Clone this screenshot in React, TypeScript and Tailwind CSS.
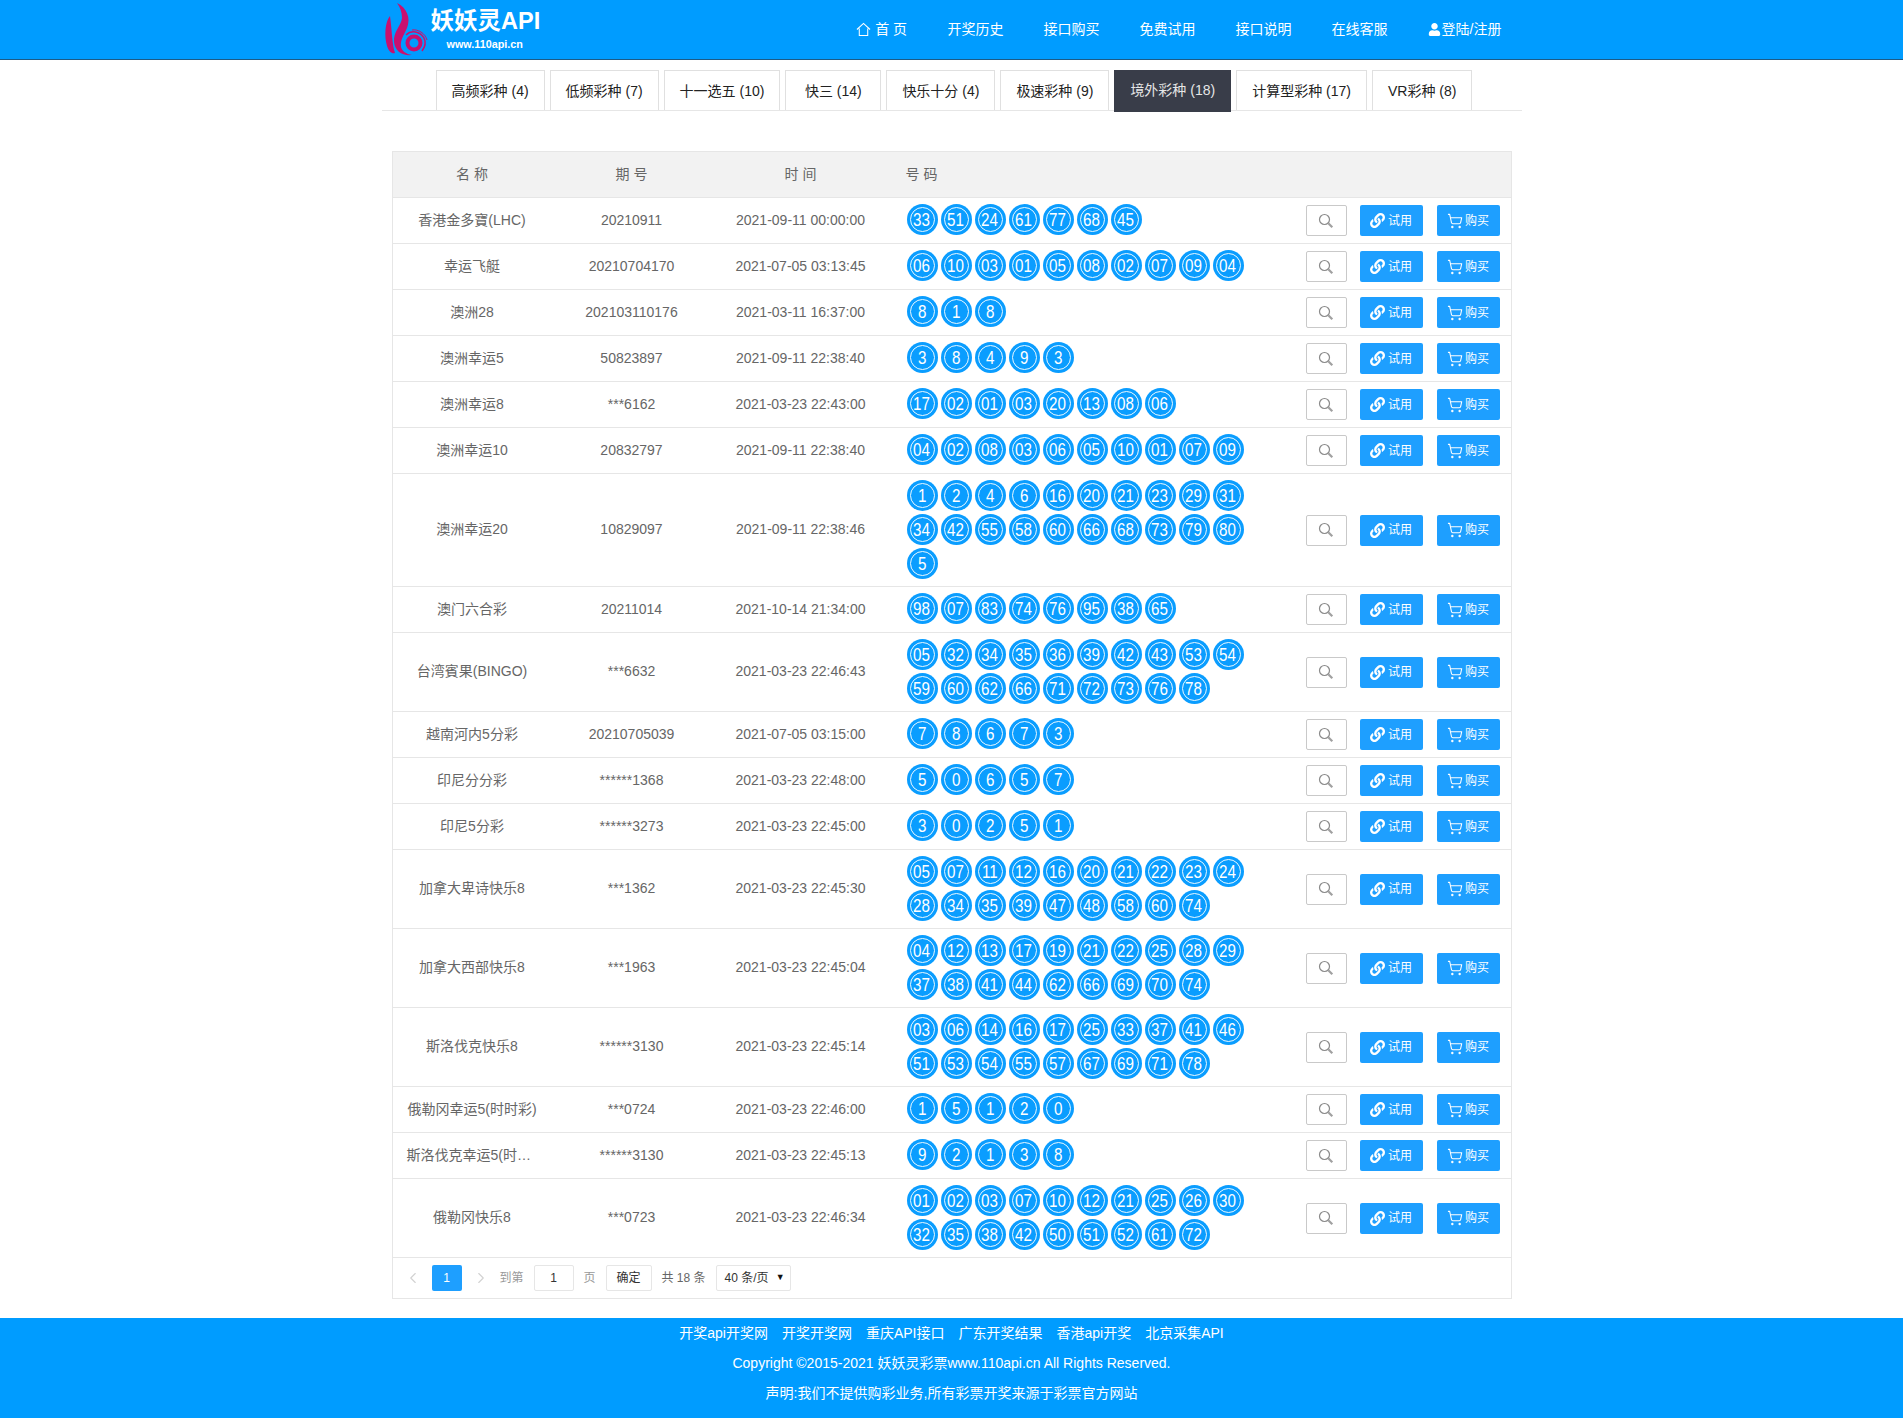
import React from 'react';
import { ChevronLeft, ChevronRight, ShoppingCart } from "lucide-react";
import { FaLink, FaUser } from "react-icons/fa";

const navItems = ["开奖历史", "接口购买", "免费试用", "接口说明", "在线客服"];

const tabs = [
  { label: "高频彩种 (4)" },
  { label: "低频彩种 (7)" },
  { label: "十一选五 (10)" },
  { label: "快三 (14)" },
  { label: "快乐十分 (4)" },
  { label: "极速彩种 (9)" },
  { label: "境外彩种 (18)", active: true },
  { label: "计算型彩种 (17)" },
  { label: "VR彩种 (8)" },
];

const rows = [
  { name: "香港金多寶(LHC)", issue: "20210911", time: "2021-09-11 00:00:00", nums: "33 51 24 61 77 68 45" },
  { name: "幸运飞艇", issue: "20210704170", time: "2021-07-05 03:13:45", nums: "06 10 03 01 05 08 02 07 09 04" },
  { name: "澳洲28", issue: "202103110176", time: "2021-03-11 16:37:00", nums: "8 1 8" },
  { name: "澳洲幸运5", issue: "50823897", time: "2021-09-11 22:38:40", nums: "3 8 4 9 3" },
  { name: "澳洲幸运8", issue: "***6162", time: "2021-03-23 22:43:00", nums: "17 02 01 03 20 13 08 06" },
  { name: "澳洲幸运10", issue: "20832797", time: "2021-09-11 22:38:40", nums: "04 02 08 03 06 05 10 01 07 09" },
  { name: "澳洲幸运20", issue: "10829097", time: "2021-09-11 22:38:46", nums: "1 2 4 6 16 20 21 23 29 31 34 42 55 58 60 66 68 73 79 80 5" },
  { name: "澳门六合彩", issue: "20211014", time: "2021-10-14 21:34:00", nums: "98 07 83 74 76 95 38 65" },
  { name: "台湾賓果(BINGO)", issue: "***6632", time: "2021-03-23 22:46:43", nums: "05 32 34 35 36 39 42 43 53 54 59 60 62 66 71 72 73 76 78" },
  { name: "越南河内5分彩", issue: "20210705039", time: "2021-07-05 03:15:00", nums: "7 8 6 7 3" },
  { name: "印尼分分彩", issue: "******1368", time: "2021-03-23 22:48:00", nums: "5 0 6 5 7" },
  { name: "印尼5分彩", issue: "******3273", time: "2021-03-23 22:45:00", nums: "3 0 2 5 1" },
  { name: "加拿大卑诗快乐8", issue: "***1362", time: "2021-03-23 22:45:30", nums: "05 07 11 12 16 20 21 22 23 24 28 34 35 39 47 48 58 60 74" },
  { name: "加拿大西部快乐8", issue: "***1963", time: "2021-03-23 22:45:04", nums: "04 12 13 17 19 21 22 25 28 29 37 38 41 44 62 66 69 70 74" },
  { name: "斯洛伐克快乐8", issue: "******3130", time: "2021-03-23 22:45:14", nums: "03 06 14 16 17 25 33 37 41 46 51 53 54 55 57 67 69 71 78" },
  { name: "俄勒冈幸运5(时时彩)", issue: "***0724", time: "2021-03-23 22:46:00", nums: "1 5 1 2 0" },
  { name: "斯洛伐克幸运5(时时彩)", issue: "******3130", time: "2021-03-23 22:45:13", nums: "9 2 1 3 8" },
  { name: "俄勒冈快乐8", issue: "***0723", time: "2021-03-23 22:46:34", nums: "01 02 03 07 10 12 21 25 26 30 32 35 38 42 50 51 52 61 72" },
];

const footerLinks = ["开奖api开奖网", "开奖开奖网", "重庆API接口", "广东开奖结果", "香港api开奖", "北京采集API"];

const Logo = () => (
  <svg viewBox="0 0 60 60" className="h-[60px] w-[60px] shrink-0">
    <path d="M11 16 C6 22 5 36 8 46 C10 52 13 54 16 53 C13 44 13 30 11 16 Z" fill="#c9106f" />
    <path d="M18 3 C28 8 32 18 28 28 C25 35 21 40 22 47 C23 51 27 54 33 55 C23 56 16 51 15 42 C14 32 22 26 23 18 C23 12 21 7 18 3 Z" fill="#c9106f" />
    <circle cx="35" cy="43" r="6.5" fill="none" stroke="#c9106f" strokeWidth="4" />
    <path d="M27 35 C32 30 41 31 45 38 C47 42 46 47 43 51" fill="none" stroke="#c9106f" strokeWidth="1.5" />
    <path d="M33 30 C39 29 46 33 48 40" fill="none" stroke="#c9106f" strokeWidth="1" />
  </svg>
);

const HomeIcon = () => (
  <svg viewBox="0 0 16 16" className="h-[15px] w-[15px]" fill="none" stroke="#fff" strokeWidth="1.1">
    <path d="M1 8 L8 1.5 L15 8 M3.5 7 V14.5 H12.5 V7" />
  </svg>
);

const SearchIcon = () => (
  <svg viewBox="0 0 16 16" className="h-[16px] w-[16px]" fill="none">
    <circle cx="6.5" cy="6.5" r="5" stroke="#8a8a8a" strokeWidth="1.2" />
    <path d="M10.3 10.3 L14.3 14.3" stroke="#a0a0a0" strokeWidth="2.2" />
  </svg>
);

const Ball = ({ value }: { value: string }) => (
  <span className="h-[31px] w-[31px] rounded-full bg-[#0a9dff] p-[3px]">
    <span className="flex h-full w-full items-center justify-center rounded-full border border-[#e8f8ff] text-white">
      <span className="scale-x-80 text-[19px] leading-none">{value}</span>
    </span>
  </span>
);

const App = () => {
  return (
    <div className="min-h-[1418px] bg-white font-['Liberation_Sans','Noto_Sans_CJK_SC',sans-serif] text-[14px] text-[#666]">
      <header className="h-[60px] border-b border-[#1d5b86] bg-[#009cff]">
        <div className="mx-auto flex h-[59px] w-[1140px] items-center justify-between">
          <div className="-ml-[3px] flex items-center">
            <Logo />
            <div className="-ml-[8px] flex -translate-y-[1px] flex-col items-start text-white">
              <span className="text-[23.5px] leading-[30px] font-bold">妖妖灵API</span>
              <span className="ml-[16px] text-[10.8px] leading-[16px] font-bold">www.110api.cn</span>
            </div>
          </div>
          <nav className="mr-[20px] flex items-center text-white">
            <a className="flex w-[92px] items-center justify-center gap-[4px]">
              <HomeIcon />
              <span>首 页</span>
            </a>
            {navItems.map((item) => (
              <a key={item} className="w-[96px] text-center">{item}</a>
            ))}
            <a className="ml-[20px] flex items-center gap-[1px]">
              <FaUser className="h-[13px] w-[13px]" />
              <span>登陆/注册</span>
            </a>
          </nav>
        </div>
      </header>

      <main className="mx-auto w-[1140px]">
        <ul className="mt-[10px] flex h-[41px] justify-center gap-[5px] border-b border-[#e6e6e6] pl-[5px]">
          {tabs.map((tab) =>
            tab.active ? (
              <li key={tab.label} className="h-[42px] min-w-[96px] bg-[#393d49] px-[16px] text-center leading-[40px] text-[#e6e6e6]">{tab.label}</li>
            ) : (
              <li key={tab.label} className="h-[40px] min-w-[96px] border-x border-t border-[#e0e0e0] px-[15px] text-center leading-[40px] text-[#222]">{tab.label}</li>
            )
          )}
        </ul>

        <div className="mx-auto mt-[40px] w-[1120px] border border-[#e6e6e6]">
          <table className="w-full table-fixed">
            <colgroup>
              <col className="w-[159px]" />
              <col className="w-[160px]" />
              <col className="w-[178px]" />
              <col className="w-[406px]" />
              <col />
            </colgroup>
            <thead>
              <tr className="h-[45px] border-b border-[#e6e6e6] bg-[#f2f2f2] text-center">
                <th className="font-normal">名 称</th>
                <th className="font-normal">期 号</th>
                <th className="font-normal">时 间</th>
                <th className="pl-[16px] text-left font-normal">号 码</th>
                <th />
              </tr>
            </thead>
            <tbody>
              {rows.map((row) => (
                <tr key={row.name} className="h-[46px] border-b border-[#e6e6e6] text-center">
                  <td className="truncate px-[14px]">{row.name}</td>
                  <td>{row.issue}</td>
                  <td>{row.time}</td>
                  <td className="pt-[6px] pb-[7px] pl-[17px]">
                    <div className="flex w-[345px] flex-wrap gap-[3px]">
                      {row.nums.split(" ").map((num, index) => (
                        <Ball key={index} value={num} />
                      ))}
                    </div>
                  </td>
                  <td className="pt-[1px]">
                    <div className="flex items-center pl-[10px]">
                      <button className="flex h-[31px] w-[41px] items-center justify-center rounded-[2px] border border-[#c9c9c9] bg-white">
                        <SearchIcon />
                      </button>
                      <button className="ml-[13px] flex h-[31px] w-[63px] items-center justify-center gap-[3px] rounded-[2px] bg-[#1e9fff] text-[12px] text-white">
                        <FaLink className="h-[15px] w-[15px]" />
                        试用
                      </button>
                      <button className="ml-[14px] flex h-[31px] w-[63px] items-center justify-center gap-[2px] rounded-[2px] bg-[#1e9fff] text-[12px] text-white">
                        <ShoppingCart className="h-[16px] w-[16px]" strokeWidth={1.6} />
                        购买
                      </button>
                    </div>
                  </td>
                </tr>
              ))}
            </tbody>
          </table>

          <div className="flex h-[40px] items-center pl-[11px] text-[12px]">
            <ChevronLeft className="h-[18px] w-[18px] text-[#d2d2d2]" strokeWidth={1.5} />
            <span className="ml-[10px] flex h-[26px] w-[30px] items-center justify-center rounded-[2px] bg-[#1e9fff] text-white">1</span>
            <ChevronRight className="ml-[10px] h-[18px] w-[18px] text-[#d2d2d2]" strokeWidth={1.5} />
            <span className="ml-[10px] text-[#999]">到第</span>
            <span className="ml-[10px] flex h-[26px] w-[40px] items-center justify-center rounded-[2px] border border-[#e6e6e6] text-[#333]">1</span>
            <span className="ml-[10px] text-[#999]">页</span>
            <span className="ml-[10px] flex h-[26px] w-[46px] items-center justify-center rounded-[2px] border border-[#e6e6e6] text-[#333]">确定</span>
            <span className="ml-[10px]">共 18 条</span>
            <span className="ml-[10px] flex h-[26px] w-[75px] items-center justify-between rounded-[2px] border border-[#e6e6e6] pr-[5px] pl-[8px] text-[#333]">
              40 条/页
              <span className="text-[9px] text-[#111]">▼</span>
            </span>
          </div>
        </div>
      </main>

      <footer className="mt-[19px] h-[102px] bg-[#009cff] text-center leading-[30px] text-white">
        <div className="flex justify-center gap-[14px]">
          {footerLinks.map((link) => (
            <a key={link}>{link}</a>
          ))}
        </div>
        <p>Copyright ©2015-2021 妖妖灵彩票www.110api.cn All Rights Reserved.</p>
        <p>声明:我们不提供购彩业务,所有彩票开奖来源于彩票官方网站</p>
      </footer>
    </div>
  );
};

export default App;
